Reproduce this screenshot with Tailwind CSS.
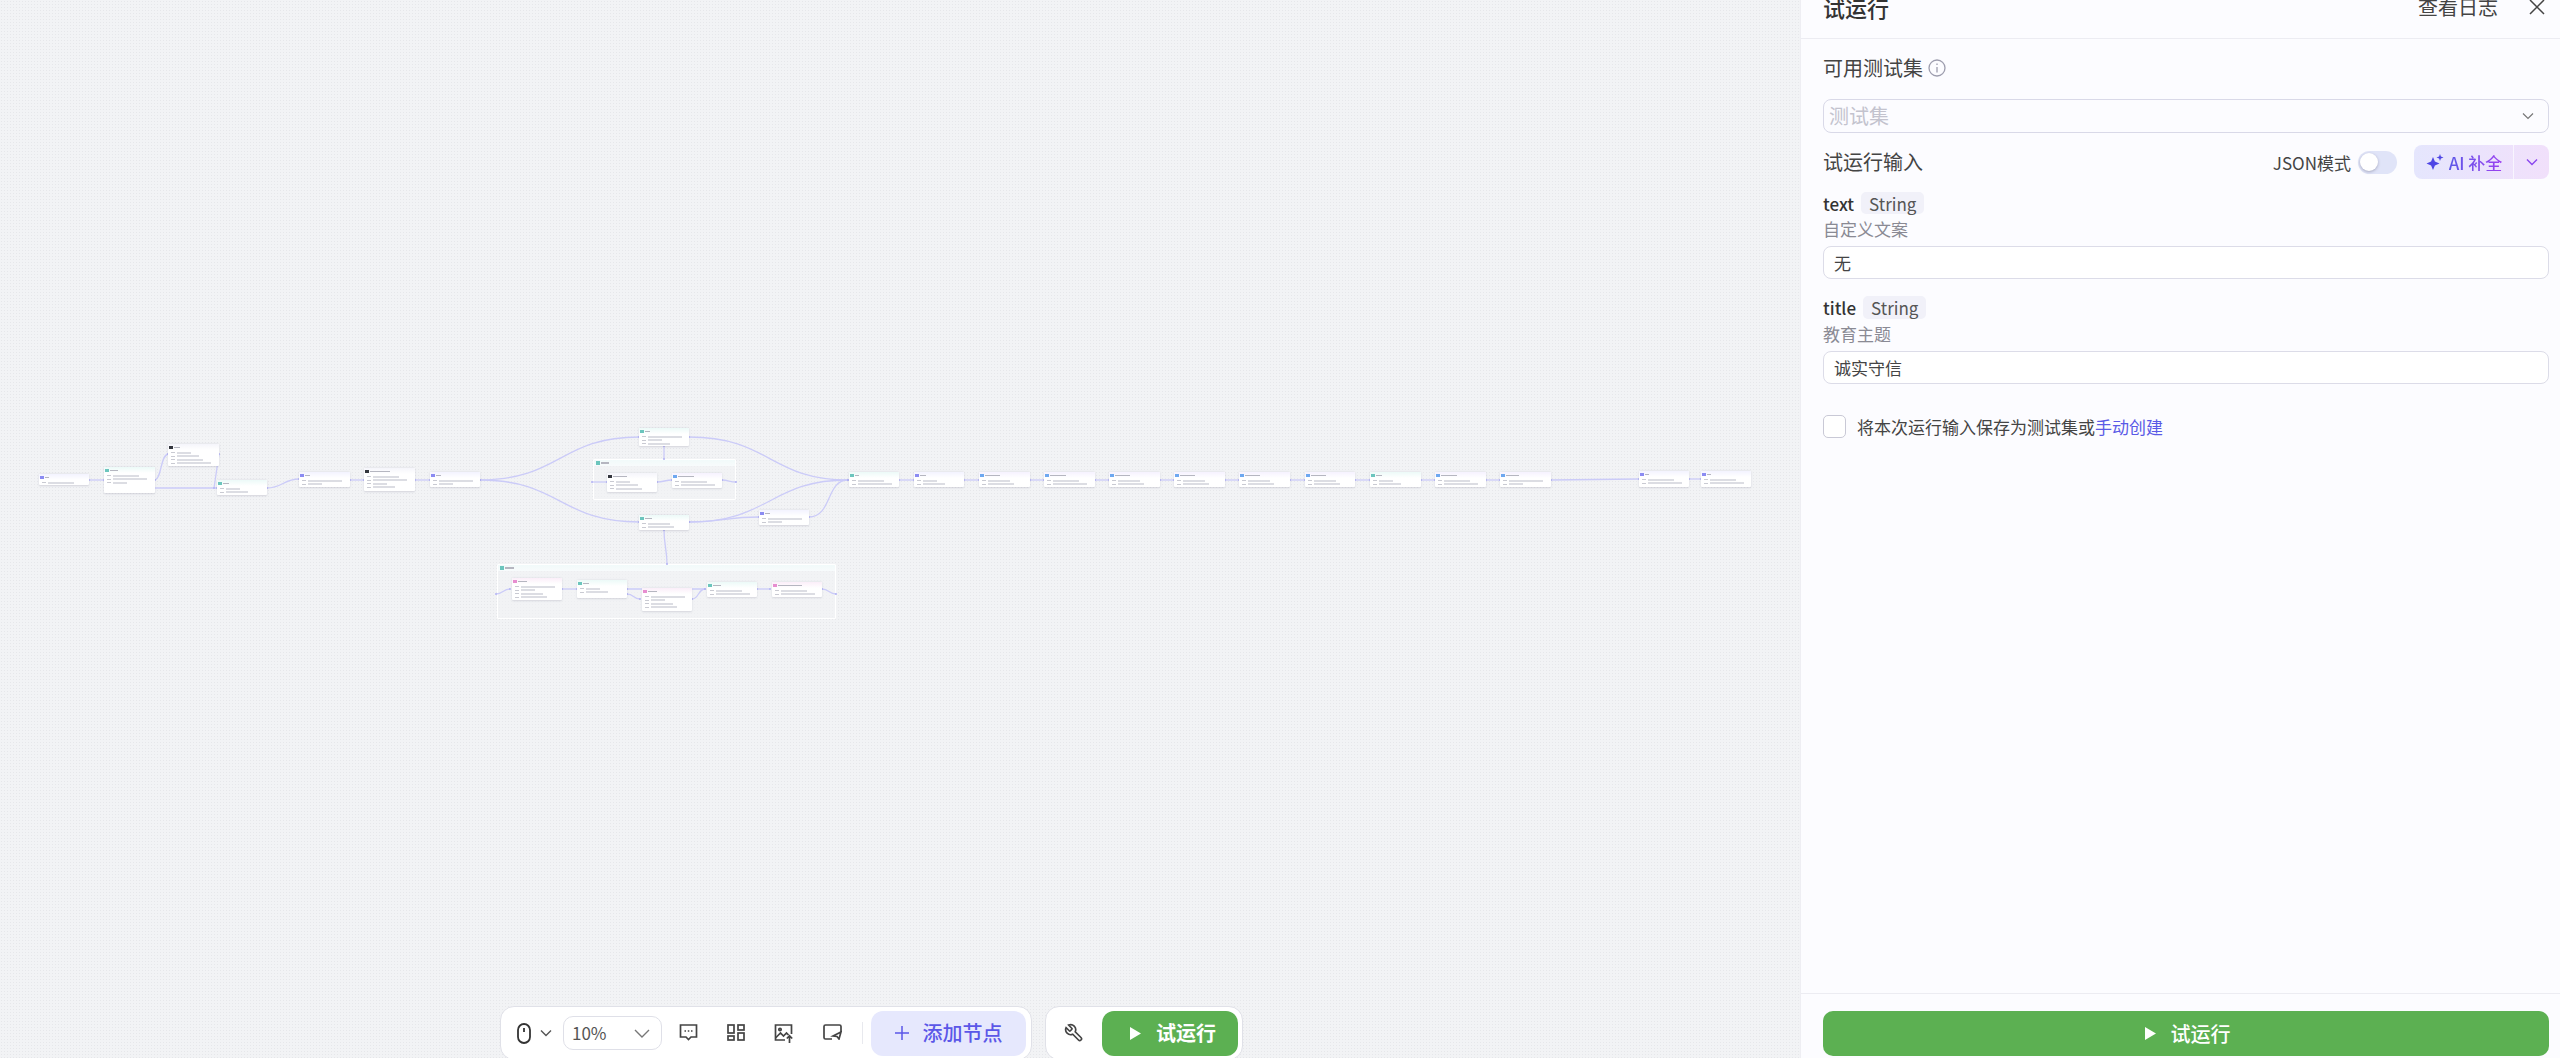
<!DOCTYPE html>
<html lang="zh-CN">
<head>
    <meta charset="UTF-8">
    <meta name="viewport" content="width=device-width, initial-scale=1.0">
    <title>试运行</title>
    <script src="https://cdn.jsdelivr.net/npm/@tailwindcss/browser@4"></script>
</head>
<body class="overflow-hidden font-['Noto_Sans_CJK_SC','Noto_Sans',sans-serif]">
<div class="flex h-[1058px] w-[2560px] overflow-hidden bg-[#f2f3f5]">
    <!-- 画布 -->
    <main class="relative flex-1 overflow-hidden bg-[radial-gradient(#e6e7ea_0.7px,transparent_0.7px)] bg-[length:3px_3px]">
        <div id="flow" class="absolute inset-0 blur-[0.5px]">
            <svg id="edges" class="absolute inset-0 z-10" width="1800" height="1058" fill="none" stroke="#cbcbf8" stroke-width="1.300">
                <path d="M89 480H104"/>
                <path d="M155 480C162 478 160 456 168 454"/>
                <path d="M219 454L214 488"/>
                <path d="M154 488H217"/>
                <path d="M267 488C282 488 284 479 299 479"/>
                <path d="M350 480H364"/>
                <path d="M415 480H430"/>
                <path d="M480 480C560 480 560 437 639 437"/>
                <path d="M480 480C560 480 560 522 639 522"/>
                <path d="M689 437C770 437 770 480 848 480"/>
                <path d="M689 522C770 522 770 480 848 480"/>
                <path d="M689 522C725 522 725 517 759 517"/>
                <path d="M809 517C832 517 826 480 848 480"/>
                <path d="M664 446V459"/>
                <path d="M664 530C664 545 667 550 667 564"/>
                <path d="M592 482H607"/>
                <path d="M657 482C664 482 665 480 672 480"/>
                <path d="M722 480C729 480 729 482 736 482"/>
                <path d="M496 594C503 594 503 589 510 589"/>
                <path d="M562 589H577"/>
                <path d="M627 589H705"/>
                <path d="M627 594C634 594 633 599 640 599"/>
                <path d="M692 599C699 599 698 589 705 589"/>
                <path d="M757 589H770"/>
                <path d="M822 589C829 589 829 594 836 594"/>
                <path d="M899 480H914"/>
                <path d="M964 480H979"/>
                <path d="M1030 480H1044"/>
                <path d="M1095 480H1109"/>
                <path d="M1160 480H1174"/>
                <path d="M1225 480H1239"/>
                <path d="M1290 480H1305"/>
                <path d="M1355 480H1370"/>
                <path d="M1421 480H1435"/>
                <path d="M1486 480H1500"/>
                <path d="M1551 480L1639 479"/>
                <path d="M1689 479H1701"/>
            </svg>
            <div id="loops"></div>
            <div id="nodes"></div>
        </div>

        <!-- 底部工具栏 -->
        <div class="absolute left-[500px] top-[1006px] z-20 flex gap-[13px]">
            <div class="flex h-[54px] w-[532px] items-center rounded-[14px] border border-[#e0e1e8] bg-white pl-[16px]">
                <svg width="14" height="21" viewBox="0 0 14 21" fill="none" stroke="#333" stroke-width="1.800"><rect x="1" y="1" width="12" height="19" rx="6"/><path d="M7 5v4"/></svg>
                <svg class="ml-[9px]" width="12" height="8" viewBox="0 0 12 8" fill="none" stroke="#555" stroke-width="1.400"><path d="M1 1.500l5 5 5-5"/></svg>
                <div class="ml-[11px] flex h-[34px] w-[99px] items-center justify-between rounded-[10px] border border-[#dfe0e8] pl-[8px] pr-[11px] text-[17px] text-[#555]">
                    <span>10%</span>
                    <svg width="16" height="9" viewBox="0 0 16 9" fill="none" stroke="#777" stroke-width="1.400"><path d="M1 1l7 7 7-7"/></svg>
                </div>
                <div class="ml-[2px] flex">
                    <div class="flex w-[48px] justify-center">
                        <svg width="19" height="17" viewBox="0 0 19 17" fill="none" stroke="#444" stroke-width="1.700"><path d="M1.500 1h16v12h-5.500l-2.500 2.500L7 13H1.500z"/><path d="M5.500 7h1.500M8.800 7h1.500M12 7h1.500"/></svg>
                    </div>
                    <div class="flex w-[48px] justify-center">
                        <svg width="18" height="17" viewBox="0 0 18 17" fill="none" stroke="#444" stroke-width="1.700"><rect x="1" y="1" width="6" height="8"/><rect x="11" y="1" width="6" height="5"/><rect x="1" y="12" width="6" height="4"/><rect x="11" y="9" width="6" height="7"/></svg>
                    </div>
                    <div class="flex w-[48px] justify-center">
                        <svg width="20" height="19" viewBox="0 0 20 19" fill="none" stroke="#444" stroke-width="1.700"><path d="M11 16H1.500V1h16v9"/><path d="M1.500 14l5-5 3 3 3-3 2 2"/><circle cx="6" cy="5.500" r="1.200"/><path d="M15.500 19v-7M12.800 14.500l2.700-2.700 2.700 2.700"/></svg>
                    </div>
                    <div class="flex w-[48px] justify-center">
                        <svg width="19" height="16" viewBox="0 0 19 16" fill="none" stroke="#444" stroke-width="1.700"><path d="M9 15H2.500A1.500 1.500 0 0 1 1 13.500v-11A1.500 1.500 0 0 1 2.500 1h14A1.500 1.500 0 0 1 18 2.500V8"/><path d="M10 12l8-4-2 7-2-2.500z"/></svg>
                    </div>
                </div>
                <div class="ml-[6px] h-[22px] w-px bg-[#e8e9ee]"></div>
                <button class="ml-[8px] flex h-[45px] w-[155px] items-center justify-center gap-[14px] rounded-[12px] bg-[#e6e8fd] text-[20px] font-medium text-[#5b57e8]">
                    <svg width="14" height="14" viewBox="0 0 14 14" fill="none" stroke="#5b57e8" stroke-width="1.500"><path d="M7 0v14M0 7h14"/></svg>
                    <span>添加节点</span>
                </button>
            </div>
            <div class="flex h-[54px] w-[198px] items-center rounded-[14px] border border-[#e0e1e8] bg-white pl-[18px]">
                <svg width="20" height="20" viewBox="0 0 24 24" fill="none" stroke="#444" stroke-width="2"><g transform="translate(24 0) scale(-1 1)"><path d="M14.700 6.300a1 1 0 0 0 0 1.400l1.600 1.600a1 1 0 0 0 1.400 0l3.770-3.770a6 6 0 0 1-7.940 7.940l-6.910 6.910a2.120 2.120 0 0 1-3-3l6.910-6.910a6 6 0 0 1 7.940-7.940l-3.760 3.760z"/></g></svg>
                <button class="ml-[18px] flex h-[45px] w-[136px] items-center gap-[15px] rounded-[12px] bg-[#5cb052] pl-[28px] text-[20px] font-bold text-white">
                    <svg width="11" height="13" viewBox="0 0 11 13" fill="#fff"><path d="M0 0l11 6.500L0 13z"/></svg>
                    <span>试运行</span>
                </button>
            </div>
        </div>
    </main>

    <!-- 右侧面板 -->
    <aside class="flex h-[1058px] w-[760px] flex-col overflow-hidden border-l border-[#eeeef3] bg-[#fcfcff] text-[#444]">
        <header class="-mt-[25px] flex h-[64px] shrink-0 items-center justify-between border-b border-[#ececf2] pl-[22px] pr-[15px]">
            <h2 class="text-[22px] font-medium leading-none text-[#333]">试运行</h2>
            <div class="flex items-center gap-[31px]">
                <span class="text-[20px] leading-none text-[#444]">查看日志</span>
                <svg width="16" height="16" viewBox="0 0 16 16" fill="none" stroke="#444" stroke-width="1.500"><path d="M1 1l14 14M15 1L1 15"/></svg>
            </div>
        </header>

        <div class="flex-1 pl-[22px] pr-[11px]">
            <div class="mt-[17px] flex h-[24px] items-center gap-[5px]">
                <span class="text-[20px] leading-none">可用测试集</span>
                <svg width="18" height="18" viewBox="0 0 18 18" fill="none" stroke="#9d9dae" stroke-width="1.300"><circle cx="9" cy="9" r="8"/><path d="M9 8v5.500M9 4.500v1.500"/></svg>
            </div>
            <div class="mt-[19px] flex h-[34px] items-center justify-between rounded-[8px] border border-[#d9d9e8] pl-[5px] pr-[14px] text-[20px] text-[#c3c3ce]">
                <span class="leading-none">测试集</span>
                <svg width="12" height="8" viewBox="0 0 12 8" fill="none" stroke="#777" stroke-width="1.200"><path d="M1 1.500l5 5 5-5"/></svg>
            </div>
            <div class="mt-[12px] flex h-[34px] items-center justify-between">
                <span class="text-[20px] leading-none">试运行输入</span>
                <div class="flex items-center">
                    <span class="text-[17px] leading-none">JSON模式</span>
                    <div class="ml-[7px] flex h-[23px] w-[39px] items-center rounded-full bg-[#e0e4f8] pl-[2px]">
                        <div class="h-[18px] w-[18px] rounded-full bg-white shadow-[0_1px_3px_rgba(60,60,90,0.35)]"></div>
                    </div>
                    <div class="ml-[17px] flex h-[34px] w-[135px] items-center rounded-[8px] bg-gradient-to-r from-[#e5e6fd] to-[#f1e0fb]">
                        <div class="flex h-full w-[100px] items-center justify-center gap-[4px] border-r border-[#f8f5fe] text-[17px] font-medium">
                            <svg width="20" height="20" viewBox="0 0 20 20" fill="#4f46e5"><path d="M8 5l1.900 4.600L14.500 11.500l-4.600 1.900L8 18l-1.900-4.600L1.500 11.500l4.600-1.900z"/><path d="M15 2l.9 2.600 2.600.9-2.600.9-.9 2.600-.9-2.600-2.600-.9 2.600-.9z"/></svg>
                            <span class="bg-gradient-to-r from-[#5b57e8] to-[#9a3ff0] bg-clip-text leading-none text-transparent">AI 补全</span>
                        </div>
                        <div class="flex flex-1 items-center justify-center">
                            <svg width="12" height="8" viewBox="0 0 12 8" fill="none" stroke="#8a46ee" stroke-width="1.400"><path d="M1 1.500l5 5 5-5"/></svg>
                        </div>
                    </div>
                </div>
            </div>

            <div class="mt-[13px] flex h-[22px] items-center gap-[7px]">
                <span class="text-[17px] font-medium leading-none text-[#333]">text</span>
                <span class="flex h-[22px] items-center rounded-[5px] bg-[#f1f1f9] px-[8px] text-[17px] leading-none text-[#555]">String</span>
            </div>
            <p class="mt-[4px] text-[17px] leading-[22px] text-[#8a8a94]">自定义文案</p>
            <div class="mt-[6px] flex h-[33px] items-center rounded-[8px] border border-[#dcdce8] bg-white pl-[10px] text-[17px]">无</div>

            <div class="mt-[17px] flex h-[23px] items-center gap-[7px]">
                <span class="text-[17px] font-medium leading-none text-[#333]">title</span>
                <span class="flex h-[23px] items-center rounded-[5px] bg-[#f1f1f9] px-[8px] text-[17px] leading-none text-[#555]">String</span>
            </div>
            <p class="mt-[4px] text-[17px] leading-[22px] text-[#8a8a94]">教育主题</p>
            <div class="mt-[6px] flex h-[33px] items-center rounded-[8px] border border-[#dcdce8] bg-white pl-[10px] text-[17px]">诚实守信</div>

            <label class="mt-[31px] flex h-[23px] items-center gap-[11px] text-[17px]">
                <span class="h-[23px] w-[23px] rounded-[5px] border border-[#c9c9d6] bg-white"></span>
                <span class="leading-none">将本次运行输入保存为测试集或<a class="text-[#5a5ae6]">手动创建</a></span>
            </label>
        </div>

        <footer class="flex h-[65px] shrink-0 justify-center border-t border-[#ececf2] pl-[22px] pr-[11px] pt-[17px]">
            <button class="flex h-[45px] w-full items-center justify-center gap-[15px] rounded-[10px] bg-[#5cb052] pl-[3px] text-[20px] font-medium text-white">
                <svg width="11" height="13" viewBox="0 0 11 13" fill="#fff"><path d="M0 0l11 6.500L0 13z"/></svg>
                <span>试运行</span>
            </button>
        </footer>
    </aside>
</div>

<script>
    // 节点样式
    const kinds = {
        var: { icon: 'bg-[#8b8bf2]', head: 'from-[#f3f3ff]' },
        teal: { icon: 'bg-[#6cc5bd]', head: 'from-[#ecfaf8]' },
        dark: { icon: 'bg-[#33363d]', head: 'from-[#f5f5fb]' },
        blue: { icon: 'bg-[#6ea8f0]', head: 'from-[#f6f2ff]' },
        pink: { icon: 'bg-[#e78ed0]', head: 'from-[#fbeef9]' }
    };

    // [x, y, w, h, 类型, 标题宽度, 行数]
    const nodes = [
        [39, 474, 50, 11, 'var', 4, 1],
        [104, 467, 51, 26, 'teal', 8, 3],
        [168, 444, 51, 22, 'dark', 6, 4],
        [217, 480, 50, 15, 'teal', 6, 2],
        [299, 472, 51, 15, 'var', 5, 2],
        [364, 468, 51, 23, 'dark', 20, 4],
        [430, 472, 50, 15, 'var', 5, 2],
        [639, 428, 50, 18, 'teal', 5, 3],
        [607, 473, 50, 19, 'dark', 14, 3],
        [672, 473, 50, 15, 'blue', 16, 2],
        [639, 515, 50, 15, 'teal', 7, 2],
        [759, 510, 50, 15, 'var', 5, 2],
        [512, 578, 50, 22, 'pink', 9, 4],
        [577, 580, 50, 18, 'teal', 6, 2],
        [642, 588, 50, 23, 'pink', 9, 4],
        [707, 582, 50, 15, 'teal', 8, 2],
        [772, 582, 50, 15, 'pink', 24, 2],
        [849, 472, 50, 15, 'teal', 4, 2],
        [914, 472, 50, 15, 'var', 6, 2],
        [979, 472, 51, 15, 'blue', 15, 2],
        [1044, 472, 51, 15, 'blue', 16, 2],
        [1109, 472, 51, 15, 'blue', 15, 2],
        [1174, 472, 51, 15, 'blue', 15, 2],
        [1239, 472, 51, 15, 'blue', 15, 2],
        [1305, 472, 50, 15, 'blue', 15, 2],
        [1370, 472, 51, 15, 'teal', 6, 2],
        [1435, 472, 51, 15, 'blue', 16, 2],
        [1500, 472, 51, 15, 'blue', 13, 2],
        [1639, 471, 50, 16, 'var', 4, 2],
        [1701, 471, 50, 16, 'var', 4, 2]
    ];

    const rowWidths = [26, 34, 14, 22];
    document.getElementById('nodes').innerHTML = nodes.map(([x, y, w, h, kind, title, rows]) => {
        const k = kinds[kind];
        const lines = Array.from({ length: rows }, (_, i) => `
            <div class="mt-[1.5px] flex h-[2px] items-center gap-[2px] pl-[3px]">
                <div class="h-[1px] w-[4px] bg-[#c9cad2]"></div>
                <div class="h-[2px] bg-[#dcdde3]" style="width:${Math.min(rowWidths[(i + title) % 4], w - 12)}px"></div>
            </div>`).join('');
        return `
        <div class="absolute z-20 overflow-hidden rounded-[1px] bg-white shadow-[0_0.5px_2px_rgba(90,90,120,0.2)]" style="left:${x}px;top:${y}px;width:${w}px;height:${h}px">
            <div class="h-[6px] bg-gradient-to-b ${k.head} to-white flex items-center gap-[1px] pl-[1px] pt-[1px]">
                <div class="h-[3.5px] w-[3.5px] ${k.icon}"></div>
                <div class="h-[1.5px] bg-[#b5b6c0]" style="width:${title}px"></div>
            </div>
            ${lines}
        </div>`;
    }).join('');

    // 循环容器 [x, y, w, h, 标题宽度]
    const loops = [[593, 459, 143, 41, 8], [497, 564, 339, 55, 9]];
    document.getElementById('loops').innerHTML = loops.map(([x, y, w, h, title]) => `
        <div class="absolute rounded-[1px] border border-white bg-[#f2f3f5]/60" style="left:${x}px;top:${y}px;width:${w}px;height:${h}px">
            <div class="flex h-[6px] items-center gap-[1px] bg-gradient-to-b from-[#f1fafa] to-[#f8fbfc] pl-[2px]">
                <div class="h-[3.5px] w-[3.5px] bg-[#6cc5bd]"></div>
                <div class="h-[1.5px] bg-[#b5b6c0]" style="width:${title}px"></div>
            </div>
        </div>`).join('');

    // 连线两端的小圆点
    const edges = document.getElementById('edges');
    edges.querySelectorAll('path').forEach(path => {
        const end = path.getPointAtLength(path.getTotalLength());
        const start = path.getPointAtLength(0);
        [start, end].forEach(p => {
            const dot = document.createElementNS('http://www.w3.org/2000/svg', 'circle');
            dot.setAttribute('cx', p.x);
            dot.setAttribute('cy', p.y);
            dot.setAttribute('r', 1);
            dot.setAttribute('fill', '#b4b4f3');
            dot.setAttribute('stroke', 'none');
            edges.appendChild(dot);
        });
    });
</script>
</body>
</html>
